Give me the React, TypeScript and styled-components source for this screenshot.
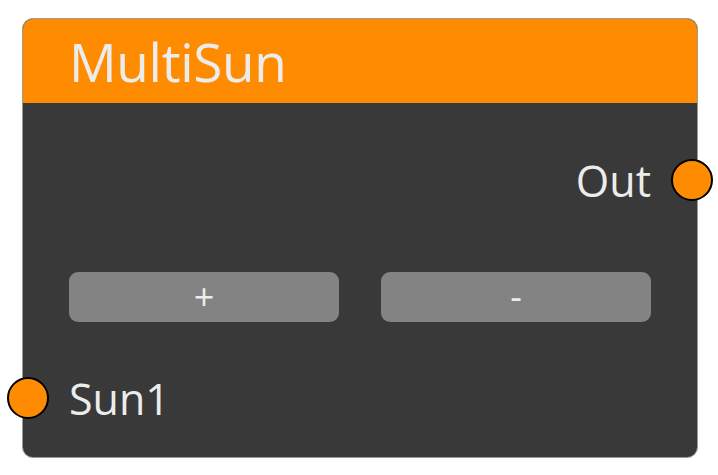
import React from "react";
import styled, { createGlobalStyle } from "styled-components";

const Global = createGlobalStyle`
  html, body { margin: 0; padding: 0; background: #ffffff; }
  body { font-family: "Open Sans", "Noto Sans", sans-serif; }
`;

const Page = styled.div`
  width: 718px;
  height: 475px;
  padding: 18px 20px 17px 22px;
  box-sizing: border-box;
`;

const Card = styled.div`
  width: 676px;
  height: 440px;
  box-sizing: border-box;
  border: 1.5px solid #9a9a9a;
  border-radius: 11px;
  background: #393939;
  display: flex;
  flex-direction: column;
  position: relative;
`;

const Header = styled.div`
  height: 84px;
  background: #ff8c00;
  border-radius: 10px 10px 0 0;
  display: flex;
  align-items: center;
  padding-left: 46px;
  color: #ececec;
  font-size: 53px;
  letter-spacing: -0.3px;
`;

const Body = styled.div`
  display: flex;
  flex-direction: column;
  padding: 47px 46px 0 46px;
`;

const PortRow = styled.div<{ $side: "left" | "right" }>`
  height: 60px;
  display: flex;
  align-items: center;
  justify-content: ${(p) => (p.$side === "right" ? "flex-end" : "flex-start")};
  position: relative;
  color: #ececec;
  font-size: 43px;
`;

const Port = styled.span<{ $side: "left" | "right" }>`
  position: absolute;
  top: 50%;
  ${(p) => (p.$side === "right" ? "right: -62px;" : "left: -62px;")}
  width: 38px;
  height: 38px;
  margin-top: -21.5px;
  border-radius: 50%;
  background: #ff8c00;
  border: 2.5px solid #000;
`;

const ButtonRow = styled.div`
  display: grid;
  grid-template-columns: 1fr 1fr;
  gap: 42px;
  margin-top: 62px;
`;

const Button = styled.div`
  height: 50px;
  border-radius: 9px;
  background: #838383;
  color: #ececec;
  font-size: 36px;
  display: flex;
  align-items: center;
  justify-content: center;
  line-height: 1;
`;

const SunRow = styled(PortRow)`
  margin-top: 46px;
`;

const Label = styled.span`
  line-height: 1;
`;

export default function App() {
  return (
    <>
      <Global />
      <Page>
        <Card>
          <Header>MultiSun</Header>
          <Body>
            <PortRow $side="right">
              <Label>Out</Label>
              <Port $side="right" />
            </PortRow>
            <ButtonRow>
              <Button>+</Button>
              <Button>-</Button>
            </ButtonRow>
            <SunRow $side="left">
              <Port $side="left" />
              <Label>Sun1</Label>
            </SunRow>
          </Body>
        </Card>
      </Page>
    </>
  );
}
